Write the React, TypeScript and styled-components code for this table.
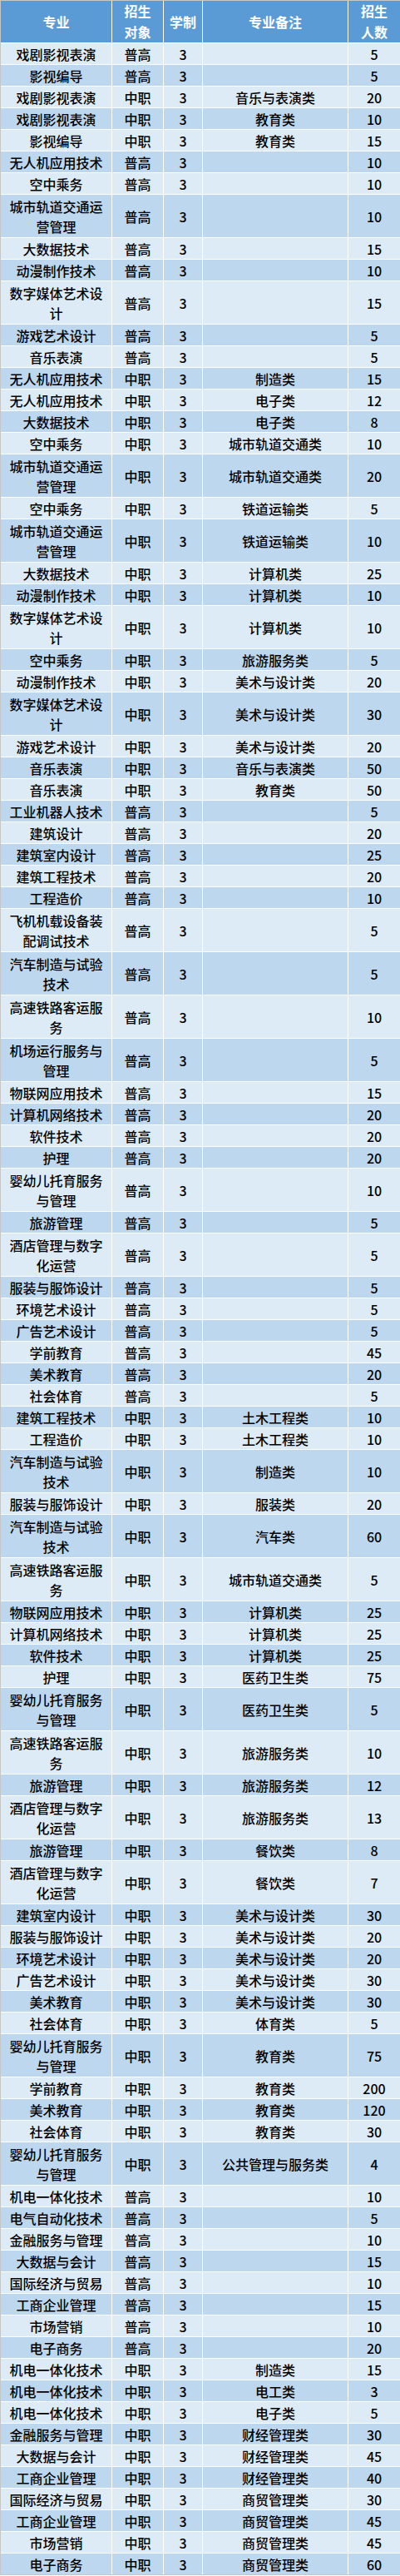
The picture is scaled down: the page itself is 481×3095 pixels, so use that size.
import React from "react";
import styled, { createGlobalStyle } from "styled-components";

// [专业, 招生对象, 专业备注, 招生人数]
type RowType = [string, string, string, number];

const rows: RowType[] = [
  ["戏剧影视表演", "普高", "", 5],
  ["影视编导", "普高", "", 5],
  ["戏剧影视表演", "中职", "音乐与表演类", 20],
  ["戏剧影视表演", "中职", "教育类", 10],
  ["影视编导", "中职", "教育类", 15],
  ["无人机应用技术", "普高", "", 10],
  ["空中乘务", "普高", "", 10],
  ["城市轨道交通运营管理", "普高", "", 10],
  ["大数据技术", "普高", "", 15],
  ["动漫制作技术", "普高", "", 10],
  ["数字媒体艺术设计", "普高", "", 15],
  ["游戏艺术设计", "普高", "", 5],
  ["音乐表演", "普高", "", 5],
  ["无人机应用技术", "中职", "制造类", 15],
  ["无人机应用技术", "中职", "电子类", 12],
  ["大数据技术", "中职", "电子类", 8],
  ["空中乘务", "中职", "城市轨道交通类", 10],
  ["城市轨道交通运营管理", "中职", "城市轨道交通类", 20],
  ["空中乘务", "中职", "铁道运输类", 5],
  ["城市轨道交通运营管理", "中职", "铁道运输类", 10],
  ["大数据技术", "中职", "计算机类", 25],
  ["动漫制作技术", "中职", "计算机类", 10],
  ["数字媒体艺术设计", "中职", "计算机类", 10],
  ["空中乘务", "中职", "旅游服务类", 5],
  ["动漫制作技术", "中职", "美术与设计类", 20],
  ["数字媒体艺术设计", "中职", "美术与设计类", 30],
  ["游戏艺术设计", "中职", "美术与设计类", 20],
  ["音乐表演", "中职", "音乐与表演类", 50],
  ["音乐表演", "中职", "教育类", 50],
  ["工业机器人技术", "普高", "", 5],
  ["建筑设计", "普高", "", 20],
  ["建筑室内设计", "普高", "", 25],
  ["建筑工程技术", "普高", "", 20],
  ["工程造价", "普高", "", 10],
  ["飞机机载设备装配调试技术", "普高", "", 5],
  ["汽车制造与试验技术", "普高", "", 5],
  ["高速铁路客运服务", "普高", "", 10],
  ["机场运行服务与管理", "普高", "", 5],
  ["物联网应用技术", "普高", "", 15],
  ["计算机网络技术", "普高", "", 20],
  ["软件技术", "普高", "", 20],
  ["护理", "普高", "", 20],
  ["婴幼儿托育服务与管理", "普高", "", 10],
  ["旅游管理", "普高", "", 5],
  ["酒店管理与数字化运营", "普高", "", 5],
  ["服装与服饰设计", "普高", "", 5],
  ["环境艺术设计", "普高", "", 5],
  ["广告艺术设计", "普高", "", 5],
  ["学前教育", "普高", "", 45],
  ["美术教育", "普高", "", 20],
  ["社会体育", "普高", "", 5],
  ["建筑工程技术", "中职", "土木工程类", 10],
  ["工程造价", "中职", "土木工程类", 10],
  ["汽车制造与试验技术", "中职", "制造类", 10],
  ["服装与服饰设计", "中职", "服装类", 20],
  ["汽车制造与试验技术", "中职", "汽车类", 60],
  ["高速铁路客运服务", "中职", "城市轨道交通类", 5],
  ["物联网应用技术", "中职", "计算机类", 25],
  ["计算机网络技术", "中职", "计算机类", 25],
  ["软件技术", "中职", "计算机类", 25],
  ["护理", "中职", "医药卫生类", 75],
  ["婴幼儿托育服务与管理", "中职", "医药卫生类", 5],
  ["高速铁路客运服务", "中职", "旅游服务类", 10],
  ["旅游管理", "中职", "旅游服务类", 12],
  ["酒店管理与数字化运营", "中职", "旅游服务类", 13],
  ["旅游管理", "中职", "餐饮类", 8],
  ["酒店管理与数字化运营", "中职", "餐饮类", 7],
  ["建筑室内设计", "中职", "美术与设计类", 30],
  ["服装与服饰设计", "中职", "美术与设计类", 20],
  ["环境艺术设计", "中职", "美术与设计类", 20],
  ["广告艺术设计", "中职", "美术与设计类", 30],
  ["美术教育", "中职", "美术与设计类", 30],
  ["社会体育", "中职", "体育类", 5],
  ["婴幼儿托育服务与管理", "中职", "教育类", 75],
  ["学前教育", "中职", "教育类", 200],
  ["美术教育", "中职", "教育类", 120],
  ["社会体育", "中职", "教育类", 30],
  ["婴幼儿托育服务与管理", "中职", "公共管理与服务类", 4],
  ["机电一体化技术", "普高", "", 10],
  ["电气自动化技术", "普高", "", 5],
  ["金融服务与管理", "普高", "", 10],
  ["大数据与会计", "普高", "", 15],
  ["国际经济与贸易", "普高", "", 10],
  ["工商企业管理", "普高", "", 15],
  ["市场营销", "普高", "", 10],
  ["电子商务", "普高", "", 20],
  ["机电一体化技术", "中职", "制造类", 15],
  ["机电一体化技术", "中职", "电工类", 3],
  ["机电一体化技术", "中职", "电子类", 5],
  ["金融服务与管理", "中职", "财经管理类", 30],
  ["大数据与会计", "中职", "财经管理类", 45],
  ["工商企业管理", "中职", "财经管理类", 40],
  ["国际经济与贸易", "中职", "商贸管理类", 30],
  ["工商企业管理", "中职", "商贸管理类", 45],
  ["市场营销", "中职", "商贸管理类", 45],
  ["电子商务", "中职", "商贸管理类", 60],
];

const App = () => {
  return (
    <>
      <GlobalStyle />
      <Frame>
        <Table>
          <HeadCell>专业</HeadCell>
          <HeadCell>
            招生
            <br />
            对象
          </HeadCell>
          <HeadCell>学制</HeadCell>
          <HeadCell>专业备注</HeadCell>
          <HeadCell>
            招生
            <br />
            人数
          </HeadCell>
          {rows.map(([name, target, note, count], i) => {
            const alt = i % 2 === 1;
            // names longer than 7 characters wrap onto a second line
            const tall = name.length > 7;
            return (
              <React.Fragment key={i}>
                <Cell $alt={alt} $tall={tall}>{name}</Cell>
                <Cell $alt={alt} $tall={tall}>{target}</Cell>
                <Cell $alt={alt} $tall={tall}>3</Cell>
                <Cell $alt={alt} $tall={tall}>{note}</Cell>
                <Cell $alt={alt} $tall={tall}>{count}</Cell>
              </React.Fragment>
            );
          })}
        </Table>
      </Frame>
    </>
  );
};

export default App;

const GlobalStyle = createGlobalStyle`
  html, body {
    margin: 0;
    padding: 0;
    background: #fff;
  }
  body {
    font-family: "Noto Sans CJK SC", "Noto Sans", sans-serif;
  }
`;

const Frame = styled.div`
  width: 480px;
  border-left: 1px solid #c6c6c6;
  border-top: 1px solid #c6c6c6;
  border-bottom: 1px solid #c6c6c6;
`;

const Table = styled.div`
  display: grid;
  grid-template-columns: 133px 61px 46px 174px 62px;
  gap: 1px;
  background: #fff;
`;

const HeadCell = styled.div`
  display: flex;
  align-items: center;
  justify-content: center;
  height: 50px;
  background: #5b9bd5;
  color: #fff;
  font-size: 16px;
  font-weight: 700;
  line-height: 25px;
  text-align: center;
`;

const Cell = styled.div<{ $alt: boolean; $tall: boolean }>`
  display: flex;
  align-items: center;
  justify-content: center;
  box-sizing: border-box;
  height: ${(p) => (p.$tall ? 51 : 25)}px;
  padding: 0 6px;
  background: ${(p) => (p.$alt ? "#bdd7ee" : "#ddebf7")};
  color: #000;
  font-size: 16px;
  font-weight: 500;
  line-height: 24px;
  text-align: center;
`;
